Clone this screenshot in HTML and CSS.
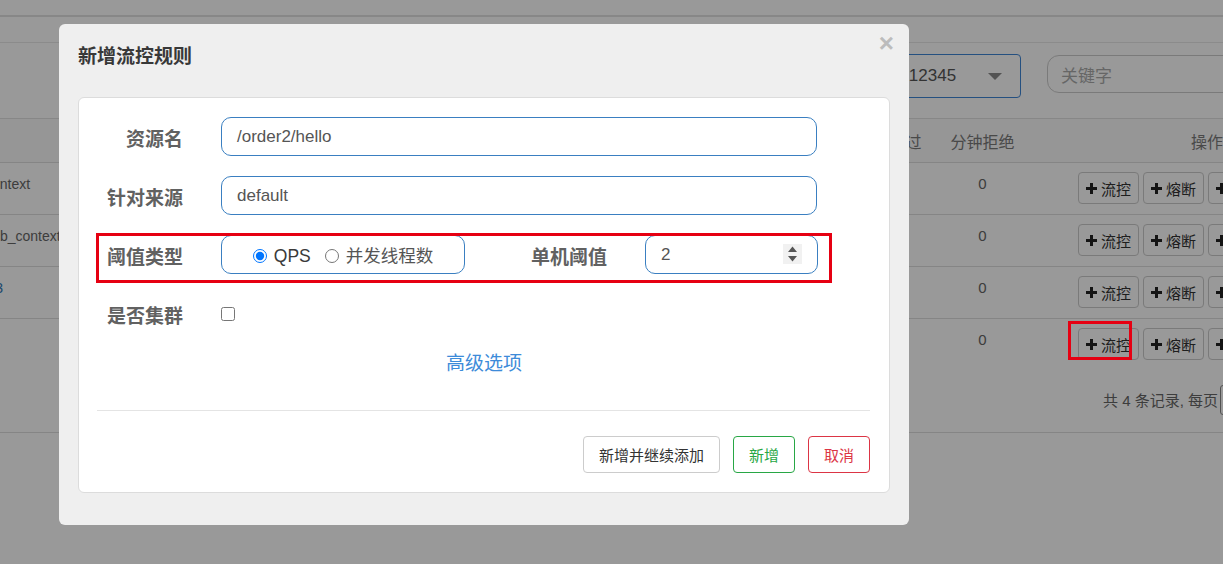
FILE: index.html
```html
<!DOCTYPE html>
<html lang="zh-CN">
<head>
<meta charset="utf-8">
<title>新增流控规则</title>
<link rel="stylesheet" href="styles.css">
</head>
<body>
<div class="page">
  <div class="topbar"></div>
  <div class="subbar"></div>
  <div class="toolbar">
    <div class="app-select"><span>localhost:12345</span><span class="caret"></span></div>
    <div class="search">关键字</div>
  </div>
  <div class="tgrid thead">
    <div class="cell"></div>
    <div class="cell center">分钟通过</div>
    <div class="cell center">分钟拒绝</div>
    <div class="cell"></div>
    <div class="cell center">操作</div>
  </div>
  <div class="tgrid trow">
    <div class="cell name"><span class="shift-a">context</span></div>
    <div class="cell num">0</div>
    <div class="cell num">0</div>
    <div class="cell"></div>
    <div class="cell ops">
      <span class="tbtn"><svg class="plus" viewBox="0 0 11 11"><path d="M4 0h3v4h4v3H7v4H4V7H0V4h4z"/></svg>流控</span>
      <span class="tbtn"><svg class="plus" viewBox="0 0 11 11"><path d="M4 0h3v4h4v3H7v4H4V7H0V4h4z"/></svg>熔断</span>
      <span class="tbtn"><svg class="plus" viewBox="0 0 11 11"><path d="M4 0h3v4h4v3H7v4H4V7H0V4h4z"/></svg>热点</span>
    </div>
  </div>
  <div class="tgrid trow">
    <div class="cell name"><span class="shift-b">web_context</span></div>
    <div class="cell num">0</div>
    <div class="cell num">0</div>
    <div class="cell"></div>
    <div class="cell ops">
      <span class="tbtn"><svg class="plus" viewBox="0 0 11 11"><path d="M4 0h3v4h4v3H7v4H4V7H0V4h4z"/></svg>流控</span>
      <span class="tbtn"><svg class="plus" viewBox="0 0 11 11"><path d="M4 0h3v4h4v3H7v4H4V7H0V4h4z"/></svg>熔断</span>
      <span class="tbtn"><svg class="plus" viewBox="0 0 11 11"><path d="M4 0h3v4h4v3H7v4H4V7H0V4h4z"/></svg>热点</span>
    </div>
  </div>
  <div class="tgrid trow">
    <div class="cell name"><span class="shift-c link">/test/3</span></div>
    <div class="cell num">0</div>
    <div class="cell num">0</div>
    <div class="cell"></div>
    <div class="cell ops">
      <span class="tbtn"><svg class="plus" viewBox="0 0 11 11"><path d="M4 0h3v4h4v3H7v4H4V7H0V4h4z"/></svg>流控</span>
      <span class="tbtn"><svg class="plus" viewBox="0 0 11 11"><path d="M4 0h3v4h4v3H7v4H4V7H0V4h4z"/></svg>熔断</span>
      <span class="tbtn"><svg class="plus" viewBox="0 0 11 11"><path d="M4 0h3v4h4v3H7v4H4V7H0V4h4z"/></svg>热点</span>
    </div>
  </div>
  <div class="tgrid trow last">
    <div class="cell name"></div>
    <div class="cell num">0</div>
    <div class="cell num">0</div>
    <div class="cell"></div>
    <div class="cell ops">
      <span class="tbtn"><svg class="plus" viewBox="0 0 11 11"><path d="M4 0h3v4h4v3H7v4H4V7H0V4h4z"/></svg>流控</span>
      <span class="tbtn"><svg class="plus" viewBox="0 0 11 11"><path d="M4 0h3v4h4v3H7v4H4V7H0V4h4z"/></svg>熔断</span>
      <span class="tbtn"><svg class="plus" viewBox="0 0 11 11"><path d="M4 0h3v4h4v3H7v4H4V7H0V4h4z"/></svg>热点</span>
    </div>
  </div>
  <div class="pager">
    <span>共 4 条记录, 每页</span>
    <span class="page-size">10</span>
    <span>条记录</span>
  </div>
</div>

<div class="backdrop"></div>

<div class="modal">
  <h4 class="modal-title">新增流控规则</h4>
  <span class="close">×</span>
  <div class="card">
    <div class="frow">
      <div class="flabel">资源名</div>
      <div class="field">/order2/hello</div>
    </div>
    <div class="frow">
      <div class="flabel">针对来源</div>
      <div class="field">default</div>
    </div>
    <div class="frow frow-split">
      <div class="flabel">阈值类型</div>
      <div class="field radios">
        <input type="radio" name="grade" checked><span class="rtext dark">QPS</span>
        <input type="radio" name="grade" class="r2"><span class="rtext">并发线程数</span>
      </div>
      <div class="flabel">单机阈值</div>
      <div class="field number">
        <span>2</span>
        <svg class="spin" viewBox="0 0 19 20"><rect width="19" height="20" fill="#f1f1f1"/><path d="M9.5 2.5L14 8H5z M5 12h9l-4.5 5.5z" fill="#555"/></svg>
      </div>
    </div>
    <div class="frow">
      <div class="flabel">是否集群</div>
      <div class="check-wrap"><input type="checkbox"></div>
    </div>
    <div class="adv">高级选项</div>
    <div class="divider"></div>
    <div class="footer">
      <span class="btn">新增并继续添加</span>
      <span class="btn btn-ok">新增</span>
      <span class="btn btn-cancel">取消</span>
    </div>
  </div>
  <div class="mark mark-form"></div>
</div>

<div class="mark mark-row"></div>
</body>
</html>
```

FILE: styles.css
```css
* { box-sizing: border-box; }
html, body { margin: 0; }
body {
  width: 1223px;
  height: 564px;
  overflow: hidden;
  position: relative;
  background: #fff;
  font-family: "Liberation Sans", "Noto Sans CJK SC", sans-serif;
  color: #333;
}

/* ---------- background page ---------- */
.page { width: 1343px; }
.topbar { height: 17px; border-bottom: 2px solid #e2e2e2; }
.subbar { height: 26px; border-bottom: 1px solid #e8e8e8; }
.toolbar {
  height: 76px;
  border-bottom: 1px solid #e2e2e2;
  display: flex;
  justify-content: flex-end;
  align-items: flex-start;
  gap: 26px;
  padding: 11px 46px 0 0;
}
.app-select {
  width: 195px;
  height: 44px;
  border: 1px solid #3f86d6;
  border-radius: 4px;
  display: flex;
  align-items: center;
  justify-content: space-between;
  padding: 0 18px 0 10px;
  font-size: 17px;
  color: #555;
}
.caret {
  width: 0; height: 0;
  border-left: 7px solid transparent;
  border-right: 7px solid transparent;
  border-top: 7px solid #8a8a8a;
}
.search {
  margin-top: 1px;
  width: 250px;
  height: 38px;
  border: 1px solid #ccc;
  border-radius: 12px;
  padding: 0 13px;
  display: flex;
  align-items: center;
  font-size: 17px;
  color: #aaa;
}

.tgrid {
  display: grid;
  grid-template-columns: 843px 93px 93px 42px 272px;
  border-bottom: 1px solid #dedede;
}
.thead { height: 44px; align-items: center; font-size: 16px; color: #7a7a7a; background: #fbfbfb; }
.center { text-align: center; }
.trow { height: 52px; font-size: 15px; color: #666; }
.trow.last { border-bottom: none; }
.cell.name { padding-top: 12px; font-size: 14px; line-height: 18px; overflow: hidden; white-space: nowrap; }
.shift-a { margin-left: -15px; }
.shift-b { margin-left: -18px; }
.shift-c { margin-left: -35px; }
.link { color: #337ab7; }
.cell.num { padding-top: 11px; line-height: 20px; text-align: center; }
.cell.ops { display: flex; gap: 4px; padding: 9px 0 0 7px; align-items: flex-start; }
.tbtn {
  display: inline-flex;
  align-items: center;
  gap: 4px;
  height: 32px;
  padding: 0 7px;
  border: 1px solid #ccc;
  border-radius: 4px;
  background: #fff;
  font-size: 15px;
  color: #333;
  white-space: nowrap;
}
.plus { width: 11px; height: 11px; fill: #222; flex: none; }
.pager {
  height: 62px;
  border-bottom: 1px solid #dedede;
  display: flex;
  align-items: center;
  gap: 4px;
  padding: 0 0 4px 1103px;
  font-size: 15px;
  color: #666;
}
.page-size {
  height: 30px;
  width: 56px;
  border: 1px solid #888;
  border-radius: 3px;
  padding: 4px 8px;
  margin-left: -2px;
}

.backdrop {
  position: fixed;
  inset: 0;
  background: rgba(0, 0, 0, 0.4);
  z-index: 10;
}

/* ---------- modal ---------- */
.modal {
  position: absolute;
  left: 59px;
  top: 24px;
  width: 850px;
  height: 501px;
  background: #efefef;
  border-radius: 6px;
  padding: 20px 19px 32px;
  z-index: 20;
}
.modal-title {
  margin: 0;
  font-size: 19px;
  line-height: 26px;
  font-weight: bold;
  color: #383838;
}
.close {
  position: absolute;
  top: 6px;
  right: 15px;
  font-size: 26px;
  line-height: 26px;
  font-weight: bold;
  color: #bcbcbc;
}
.card {
  margin-top: 27px;
  background: #fff;
  border: 1px solid #dcdcdc;
  border-radius: 6px;
  padding: 19px 0 19px;
}
.frow {
  display: grid;
  grid-template-columns: 104px 596px;
  grid-template-rows: 39px;
  column-gap: 38px;
  height: 39px;
  margin-bottom: 20px;
  align-items: center;
}
.frow-split { grid-template-columns: 104px 244px 104px 173px; }
.flabel {
  align-self: start;
  padding-top: 10px;
  text-align: right;
  font-size: 19px;
  line-height: 26px;
  font-weight: bold;
  color: #616161;
}
.field {
  height: 39px;
  border: 1px solid #3a7fc1;
  border-radius: 10px;
  padding: 0 15px;
  display: flex;
  align-items: center;
  font-size: 17px;
  color: #555;
}
.radios { justify-content: center; padding: 3px 0 0; }
.radios input { width: 14px; height: 14px; margin: 0; flex: none; }
.radios .r2 { margin-left: 14px; }
.rtext { margin-left: 7px; color: #555; line-height: 20px; font-size: 17.5px; }
.rtext.dark { color: #3a3a3a; }
.number { justify-content: space-between; }
.spin { width: 19px; height: 20px; margin-top: -1px; }
.check-wrap { display: flex; align-items: center; height: 39px; }
.check-wrap input { width: 14px; height: 14px; margin: 0; }
.adv {
  text-align: center;
  font-size: 19px;
  line-height: 20px;
  padding-top: 1px;
  color: #3d8bd9;
}
.divider {
  margin: 36px 19px 0 18px;
  height: 1px;
  background: #e4e4e4;
}
.footer {
  margin-top: 25px;
  display: flex;
  justify-content: flex-end;
  gap: 13px;
  padding-right: 19px;
}
.btn {
  height: 37px;
  padding: 0 15px;
  border: 1px solid #ccc;
  border-radius: 4px;
  background: #fff;
  display: inline-flex;
  align-items: center;
  font-size: 15px;
  color: #333;
}
.btn-ok { border-color: #28a745; color: #28a745; }
.btn-cancel { border-color: #dc3545; color: #dc3545; }

/* ---------- annotation marks ---------- */
.mark { position: absolute; border: 3px solid #e60012; z-index: 30; }
.mark-form { left: 37px; top: 209px; width: 736px; height: 50px; }
.mark-row { left: 1068px; top: 321px; width: 64px; height: 39px; }
```
